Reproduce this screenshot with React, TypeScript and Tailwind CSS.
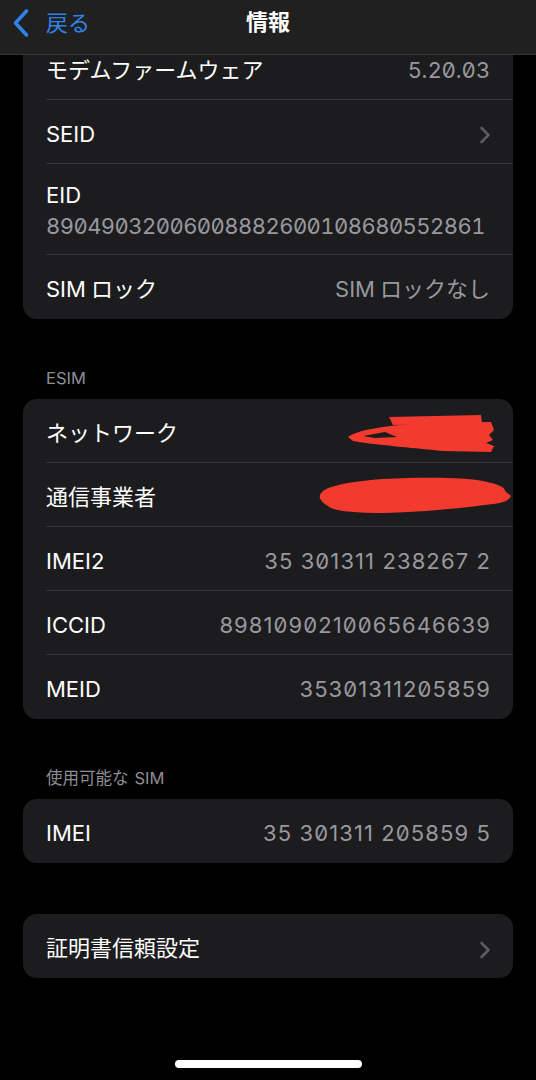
import React from "react";

const font = "font-['Inter','Noto_Sans_CJK_JP',sans-serif]";

function Chevron() {
  return (
    <svg width="12" height="18" viewBox="0 0 12 18" className="shrink-0 mr-[-1px] mt-[3px]">
      <path d="M2.5 2 L9.5 9 L2.5 16" fill="none" stroke="#5b5b60" strokeWidth="2.6" strokeLinecap="round" strokeLinejoin="round" />
    </svg>
  );
}

function Row({ label, value, chevron, last, num, children }: { label: React.ReactNode; value?: React.ReactNode; chevron?: boolean; last?: boolean; num?: boolean; children?: React.ReactNode }) {
  return (
    <div className="relative pl-[23px]">
      <div className={`flex items-center justify-between pr-[23px] h-[64px] pt-[4px] ${last ? "" : "border-b border-[#36363a]"}`}>
        <span className="text-[22px] text-white leading-[30px] whitespace-nowrap">{label}</span>
        {value && (
          <span className={`text-[22px] text-[#98989e] leading-[30px] slashed-zero whitespace-nowrap ${num ? "tracking-[1.1px] mr-[-1px]" : ""}`}>{value}</span>
        )}
        {chevron && <Chevron />}
      </div>
      {children}
    </div>
  );
}

function Card({ children, className = "" }: { children: React.ReactNode; className?: string }) {
  return <div className={`mx-[23px] rounded-[14px] bg-[#1c1c1e] overflow-hidden ${className}`}>{children}</div>;
}

function Header({ children }: { children: React.ReactNode }) {
  return <div className="pt-[49px] pb-[11px] pl-[46px] text-[16.5px] leading-[20px] text-[#8e8e93]">{children}</div>;
}

export default function App() {
  return (
    <div className={`relative min-h-[1080px] w-[536px] bg-black overflow-hidden ${font}`}>
      {/* nav bar overlay */}
      <div className="absolute top-0 left-0 right-0 z-10 h-[55px] bg-[#202020] border-b border-[#363636] flex items-center">
        <div className="flex items-center pl-[11px] mt-[-9px]">
          <svg width="20" height="30" viewBox="0 0 20 30">
            <path d="M15.5 3 L4.5 15 L15.5 27" fill="none" stroke="#2f83e6" strokeWidth="3.6" strokeLinecap="round" strokeLinejoin="round" />
          </svg>
          <span className="ml-[15px] text-[22px] leading-[28px] text-[#2f83e6]">戻る</span>
        </div>
        <div className="absolute left-0 right-0 top-[8px] text-center text-white text-[22px] leading-[28px] font-bold pointer-events-none">情報</div>
      </div>

      <div className="pt-[36px]">
        <Card>
          <Row label="モデムファームウェア" value={<span className="tracking-[0.4px]">5.20.03</span>} />
          <Row label="SEID" chevron />
          <div className="pl-[23px]">
            <div className="pr-[23px] pt-[16px] pb-[12px] border-b border-[#36363a]">
              <div className="text-[22px] text-white leading-[30px]">EID</div>
              <div className="text-[22px] text-[#98989e] leading-[32px] tabular-nums slashed-zero tracking-[-0.55px] whitespace-nowrap">89049032006008882600108680552861</div>
            </div>
          </div>
          <Row label={<><span className="mr-[5px]">SIM</span>ロック</>} value={<><span className="mr-[5px]">SIM</span>ロックなし</>} last />
        </Card>

        <Header>ESIM</Header>
        <Card>
          <Row label="ネットワーク">
            <svg className="absolute inset-0 pointer-events-none" width="489" height="64" viewBox="0 0 489 64">
              <path d="M366 18 L458 16 L459 24 L370 26 Z" fill="#f33a2e" />
              <path d="M325 38 C335 30 370 26 400 24 L468 23 L471 31 L466 36 L470 41 L463 44 L471 47 L468 53 L420 52 C390 49 345 45 330 42 Z" fill="#f33a2e" />
              <path d="M340 37 L362 33 L374 38 L352 39 Z" fill="#1c1c1e" />
            </svg>
          </Row>
          <Row label="通信事業者">
            <svg className="absolute inset-0 pointer-events-none" width="489" height="64" viewBox="0 0 489 64">
              <path d="M297 32 C300 24 320 19 360 16 C400 14 440 14 460 18 C475 21 482 24 482 28 L488 33 C486 38 478 40 470 41 C440 45 400 49 360 50 C330 50 310 48 305 43 C298 39 296 35 297 32 Z" fill="#f33a2e" />
            </svg>
          </Row>
          <Row label="IMEI2" value="35 301311 238267 2" num />
          <Row label="ICCID" value="8981090210065646639" num />
          <Row label="MEID" value="35301311205859" num last />
        </Card>

        <Header><span className="mr-[6px]">使用可能な</span>SIM</Header>
        <Card>
          <Row label="IMEI" value="35 301311 205859 5" num last />
        </Card>

        <Card className="mt-[51px]">
          <Row label="証明書信頼設定" chevron last />
        </Card>

        <div className="mt-[82px] flex justify-center">
          <div className="w-[187px] h-[8px] rounded-full bg-white" />
        </div>
      </div>
    </div>
  );
}
